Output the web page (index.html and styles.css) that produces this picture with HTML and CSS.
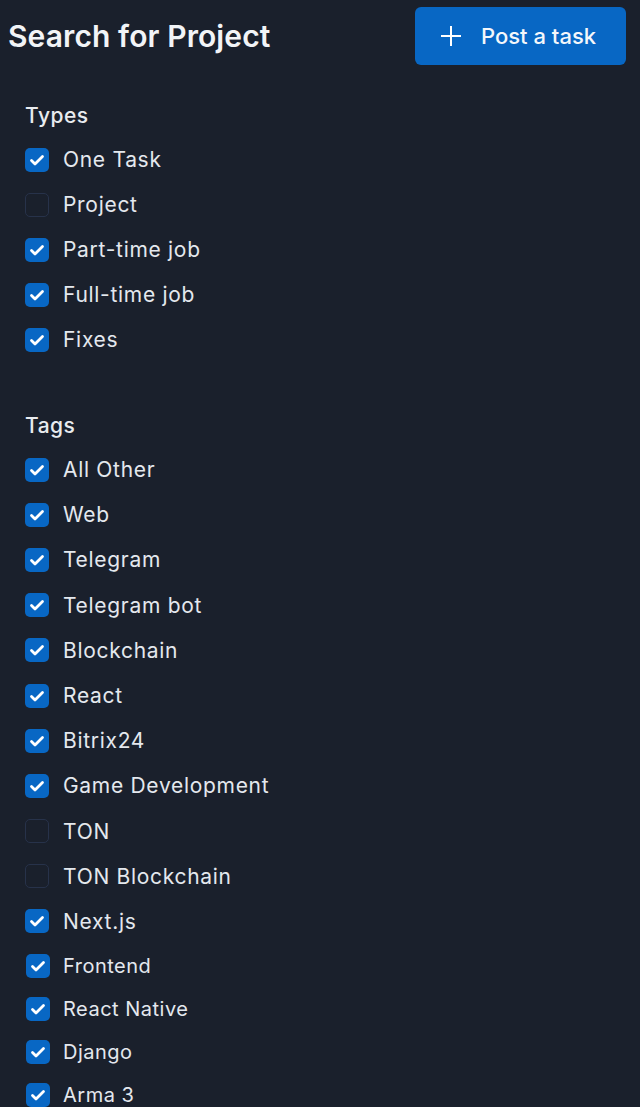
FILE: index.html
```html
<!DOCTYPE html>
<html lang="en">
<head>
<meta charset="utf-8">
<title>Search for Project</title>
<link rel="stylesheet" href="styles.css">
</head>
<body>
<header class="top">
  <h1 class="title">Search for Project</h1>
  <button class="post-btn" type="button">
    <svg class="plus" width="22" height="22" viewBox="0 0 22 22"><path d="M11 1v20M1 11h20" stroke="#fff" stroke-width="2" fill="none"/></svg>
    <span>Post a task</span>
  </button>
</header>

<section class="group types">
  <h2 class="group-title">Types</h2>
  <ul class="list">
    <li class="row"><span class="box on"></span>One Task</li>
    <li class="row"><span class="box"></span>Project</li>
    <li class="row"><span class="box on"></span>Part-time job</li>
    <li class="row"><span class="box on"></span>Full-time job</li>
    <li class="row"><span class="box on"></span>Fixes</li>
  </ul>
</section>

<section class="group tags">
  <h2 class="group-title">Tags</h2>
  <ul class="list wide">
    <li class="row"><span class="box on"></span>All Other</li>
    <li class="row"><span class="box on"></span>Web</li>
    <li class="row"><span class="box on"></span>Telegram</li>
    <li class="row"><span class="box on"></span>Telegram bot</li>
    <li class="row"><span class="box on"></span>Blockchain</li>
    <li class="row"><span class="box on"></span>React</li>
    <li class="row"><span class="box on"></span>Bitrix24</li>
    <li class="row"><span class="box on"></span>Game Development</li>
    <li class="row"><span class="box"></span>TON</li>
    <li class="row"><span class="box"></span>TON Blockchain</li>
    <li class="row"><span class="box on"></span>Next.js</li>
  </ul>
  <ul class="list compact">
    <li class="row"><span class="box on"></span>Frontend</li>
    <li class="row"><span class="box on"></span>React Native</li>
    <li class="row"><span class="box on"></span>Django</li>
    <li class="row"><span class="box on"></span>Arma 3</li>
  </ul>
</section>
</body>
</html>
```

FILE: styles.css
```css
html, body {
  margin: 0;
  padding: 0;
  background: #1a202c;
}
body {
  font-family: Inter, "Noto Sans", sans-serif;
  color: #e8ebef;
  height: 1107px;
  overflow: hidden;
}
.top {
  display: flex;
  justify-content: space-between;
  align-items: center;
  padding: 7px 14px 0 8px;
}
.title {
  margin: 0;
  font-size: 30px;
  font-weight: 600;
  letter-spacing: 0.1px;
  color: #f2f4f7;
}
.post-btn {
  display: flex;
  align-items: center;
  gap: 19px;
  height: 58px;
  width: 211px;
  padding: 0 0 0 25px;
  border: none;
  border-radius: 6px;
  background: #0867c4;
  color: #f4f7fb;
  font-family: Inter, "Noto Sans", sans-serif;
  font-size: 22px;
  font-weight: 500;
}
.plus { flex: none; }
.group {
  padding-left: 25px;
}
.types { margin-top: 39px; }
.tags { margin-top: 52px; }
.group-title {
  margin: 0 0 9px;
  font-size: 21px;
  line-height: 24px;
  font-weight: 500;
  letter-spacing: 0.5px;
  color: #e8ebef;
}
.list {
  list-style: none;
  margin: 0;
  padding: 0;
}
.row {
  display: flex;
  align-items: center;
  gap: 14px;
  height: 45px;
  font-size: 21px;
  font-weight: 400;
  letter-spacing: 0.7px;
  color: #e4e8ee;
}
.wide .row { height: 45.2px; }
.compact .row {
  height: 43px;
  font-size: 20px;
  letter-spacing: 0.5px;
  gap: 13px;
  padding-left: 1px;
}
.box {
  flex: none;
  width: 24px;
  height: 24px;
  box-sizing: border-box;
  border-radius: 5px;
  border: 1.5px solid #27324a;
  background: transparent;
}
.box.on {
  border: none;
  background: #0867c4 url("data:image/svg+xml;utf8,<svg xmlns='http://www.w3.org/2000/svg' viewBox='0 0 24 24'><path d='M6.5 12.5l3.5 3.5 7.5-7.5' stroke='white' stroke-width='2.8' fill='none' stroke-linecap='round' stroke-linejoin='round'/></svg>") center/24px 24px no-repeat;
}
```
